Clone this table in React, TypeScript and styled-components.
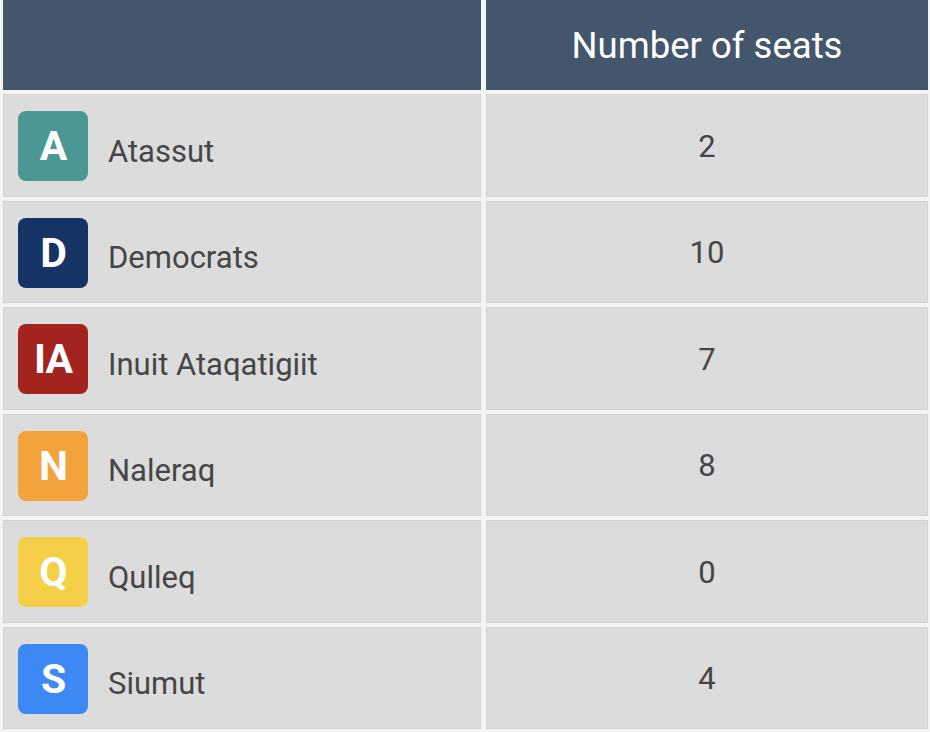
import React from "react";
import styled, { createGlobalStyle } from "styled-components";

const Global = createGlobalStyle`
  html, body { margin: 0; padding: 0; background: #f4f4f4; }
  body { font-family: Roboto, "Liberation Sans", sans-serif; }
`;

const Table = styled.div`
  display: grid;
  grid-template-columns: 478px 442px;
  grid-template-rows: 90px repeat(6, 102.5px);
  column-gap: 5px;
  row-gap: 4px;
  padding: 0 2px 4px 3px;
  width: 930px;
  box-sizing: border-box;
`;

const HeadCell = styled.div`
  background: #44566c;
  color: #ffffff;
  font-size: 36.5px;
  font-weight: 400;
  display: flex;
  align-items: center;
  justify-content: center;
  padding-bottom: 0px;
`;

const NameCell = styled.div`
  background: #dcdcdc;
  border: 1px solid #d3d3d3;
  display: flex;
  align-items: center;
  gap: 20px;
  padding: 2px 0 0 14px;
  box-sizing: border-box;
`;

const SeatCell = styled.div`
  background: #dcdcdc;
  border: 1px solid #d3d3d3;
  display: flex;
  align-items: center;
  justify-content: center;
  padding-top: 2px;
  box-sizing: border-box;
  color: #464646;
  font-size: 31px;
`;

const Badge = styled.div<{ $bg: string }>`
  width: 70px;
  height: 70px;
  border-radius: 8px;
  background: ${(p) => p.$bg};
  color: #fff;
  font-weight: 700;
  font-size: 41px;
  display: flex;
  align-items: center;
  justify-content: center;
  letter-spacing: -1px;
  flex-shrink: 0;
`;

const Name = styled.span`
  color: #464646;
  font-size: 31px;
  padding-top: 10px;
`;

const parties = [
  { code: "A", name: "Atassut", color: "#4b9793", seats: 2 },
  { code: "D", name: "Democrats", color: "#163366", seats: 10 },
  { code: "IA", name: "Inuit Ataqatigiit", color: "#a3231f", seats: 7 },
  { code: "N", name: "Naleraq", color: "#f3a33b", seats: 8 },
  { code: "Q", name: "Qulleq", color: "#f6cf48", seats: 0 },
  { code: "S", name: "Siumut", color: "#3d88f4", seats: 4 },
];

export default function App() {
  return (
    <>
      <Global />
      <Table>
        <HeadCell />
        <HeadCell>Number of seats</HeadCell>
        {parties.map((p) => (
          <React.Fragment key={p.code}>
            <NameCell>
              <Badge $bg={p.color}>{p.code}</Badge>
              <Name>{p.name}</Name>
            </NameCell>
            <SeatCell>{p.seats}</SeatCell>
          </React.Fragment>
        ))}
      </Table>
    </>
  );
}
